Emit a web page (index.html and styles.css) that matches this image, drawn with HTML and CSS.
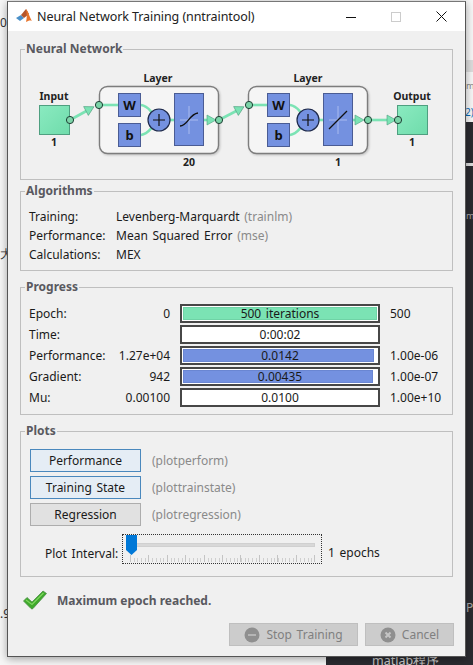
FILE: index.html
```html
<!DOCTYPE html>
<html lang="en">
<head>
    <meta charset="UTF-8">
    <meta name="viewport" content="width=device-width, initial-scale=1.0">
    <title>Neural Network Training (nntraintool)</title>
    <link rel="stylesheet" href="styles.css">
</head>
<body>
    <!-- whatever is behind the window -->
    <div class="desktop">
        <span class="peek peek-a">02</span>
        <span class="peek peek-b">大</span>
        <span class="peek peek-c">.9</span>
        <span class="peek peek-d">m</span>
        <span class="peek peek-e">2)</span>
        <span class="peek peek-h">m</span>
        <span class="peek peek-f">P</span>
        <span class="peek peek-g">matlab程序</span>
    </div>

    <div class="window">
        <div class="titlebar">
            <svg class="app-icon" width="17" height="17" viewBox="0 0 17 17">
                <path d="M0 10 L5 7 L8 10 L4 13 Z" fill="#4a90c8"/>
                <path d="M5 7 L10 1 L13 6 L8 10 Z" fill="#b5562a"/>
                <path d="M10 1 C12 3 14 10 16 13 C14 12 12 13 10 14 C11 10 11 6 10 1 Z" fill="#e8742a"/>
            </svg>
            <span class="window-title">Neural Network Training (nntraintool)</span>
            <div class="window-controls">
                <svg width="10" height="10" viewBox="0 0 10 10"><path d="M0 5.5H10" stroke="#111" stroke-width="1"/></svg>
                <svg width="10" height="10" viewBox="0 0 10 10"><rect x="0.5" y="0.5" width="9" height="9" fill="none" stroke="#ccc"/></svg>
                <svg width="11" height="11" viewBox="0 0 11 11"><path d="M0.5 0.5L10.5 10.5M10.5 0.5L0.5 10.5" stroke="#111" stroke-width="1"/></svg>
            </div>
        </div>

        <div class="content">
            <fieldset class="panel panel-network">
                <legend>Neural Network</legend>
                <svg class="diagram" width="432" height="122" viewBox="20 59 432 122">
                    <defs>
                        <linearGradient id="greenBox" x1="0" y1="0" x2="1" y2="1">
                            <stop offset="0" stop-color="#8aeac0"/>
                            <stop offset="1" stop-color="#6fdcab"/>
                        </linearGradient>
                        <g id="arrowHead"><path d="M0 -5 L9 0 L0 5 Z" fill="#7be3b4" stroke="#4f9f80" stroke-width="0.6"/></g>
                        <g id="dot"><circle r="3.6" fill="#7bd4a8" stroke="#1f3f35" stroke-width="1"/></g>
                    </defs>

                    <!-- wires, input side -->
                    <path class="wire" d="M70 120 L90 109"/>
                    <use href="#arrowHead" transform="translate(86 111) rotate(-28)"/>
                    <path class="wire" d="M219 120 L240 109"/>
                    <use href="#arrowHead" transform="translate(236 111) rotate(-28)"/>

                    <!-- layer 1 -->
                    <g class="layer">
                        <rect class="layer-box" x="99.5" y="86.5" width="119" height="67" rx="8"/>
                        <path class="wire" d="M99 105 H118"/>
                        <path class="wire" d="M141 105 C149 106 150 112 156 116"/>
                        <path class="wire" d="M141 135 C149 134 150 128 156 124"/>
                        <path class="wire" d="M168 120 H175"/>
                        <path class="wire" d="M204 120 H212"/>
                        <use href="#arrowHead" transform="translate(207 120)"/>
                        <rect class="block" x="118.5" y="93.5" width="22" height="23"/>
                        <rect class="block" x="118.5" y="123.5" width="22" height="23"/>
                        <text class="block-label" x="129.5" y="110">W</text>
                        <text class="block-label" x="129.5" y="140">b</text>
                        <circle class="sum" cx="159" cy="120" r="11"/>
                        <path class="sum-plus" d="M153 120 H165 M159 114 V126"/>
                        <rect class="block" x="174.5" y="93.5" width="29" height="52"/>
                        <path class="axis" d="M180 120 H198 M189 106 V134"/>
                        <path class="curve" d="M180 126 C188 126 189 114 198 113"/>
                        <use href="#dot" x="99" y="105"/>
                        <use href="#dot" x="219" y="120"/>
                    </g>

                    <!-- layer 2 -->
                    <g class="layer">
                        <rect class="layer-box" x="248.5" y="86.5" width="119" height="67" rx="8"/>
                        <path class="wire" d="M249 105 H267"/>
                        <path class="wire" d="M290 105 C298 106 299 112 305 116"/>
                        <path class="wire" d="M290 135 C298 134 299 128 305 124"/>
                        <path class="wire" d="M317 120 H324"/>
                        <path class="wire" d="M353 120 H361"/>
                        <use href="#arrowHead" transform="translate(355 120)"/>
                        <rect class="block" x="267.5" y="93.5" width="22" height="23"/>
                        <rect class="block" x="267.5" y="123.5" width="22" height="23"/>
                        <text class="block-label" x="278.5" y="110">W</text>
                        <text class="block-label" x="278.5" y="140">b</text>
                        <circle class="sum" cx="308" cy="120" r="11"/>
                        <path class="sum-plus" d="M302 120 H314 M308 114 V126"/>
                        <rect class="block" x="323.5" y="93.5" width="29" height="52"/>
                        <path class="axis" d="M329 120 H347 M338 106 V134"/>
                        <path class="curve" d="M329 129 L347 111"/>
                        <use href="#dot" x="249" y="105"/>
                    </g>

                    <!-- input and output -->
                    <rect class="io-box" x="39.5" y="105.5" width="30" height="29" fill="url(#greenBox)"/>
                    <rect class="io-box" x="397.5" y="105.5" width="30" height="29" fill="url(#greenBox)"/>
                    <path class="wire" d="M368 120 H392"/>
                    <use href="#arrowHead" transform="translate(387 120)"/>
                    <use href="#dot" x="70" y="120"/>
                    <use href="#dot" x="368" y="120"/>
                    <use href="#dot" x="398" y="120"/>

                    <text class="node-label" x="54" y="100">Input</text>
                    <text class="node-label" x="158" y="82">Layer</text>
                    <text class="node-label" x="308" y="82">Layer</text>
                    <text class="node-label" x="412" y="100">Output</text>
                    <text class="node-label" x="54" y="146">1</text>
                    <text class="node-label" x="412" y="146">1</text>
                    <text class="node-label" x="189" y="166">20</text>
                    <text class="node-label" x="338" y="166">1</text>
                </svg>
            </fieldset>

            <fieldset class="panel panel-algorithms">
                <legend>Algorithms</legend>
                <div class="algo-row"><span>Training:</span><span>Levenberg-Marquardt <em>(trainlm)</em></span></div>
                <div class="algo-row"><span>Performance:</span><span>Mean Squared Error <em>(mse)</em></span></div>
                <div class="algo-row"><span>Calculations:</span><span>MEX</span></div>
            </fieldset>

            <fieldset class="panel panel-progress">
                <legend>Progress</legend>
                <div class="progress-row">
                    <span>Epoch:</span><span class="start">0</span>
                    <div class="bar"><div class="fill fill-green" style="width: 100%"></div><span>500 iterations</span></div>
                    <span>500</span>
                </div>
                <div class="progress-row">
                    <span>Time:</span><span class="start"></span>
                    <div class="bar"><span>0:00:02</span></div>
                    <span></span>
                </div>
                <div class="progress-row">
                    <span>Performance:</span><span class="start">1.27e+04</span>
                    <div class="bar"><div class="fill" style="width: 98.5%"></div><span>0.0142</span></div>
                    <span>1.00e-06</span>
                </div>
                <div class="progress-row">
                    <span>Gradient:</span><span class="start">942</span>
                    <div class="bar"><div class="fill" style="width: 97.8%"></div><span>0.00435</span></div>
                    <span>1.00e-07</span>
                </div>
                <div class="progress-row">
                    <span>Mu:</span><span class="start">0.00100</span>
                    <div class="bar"><span>0.0100</span></div>
                    <span>1.00e+10</span>
                </div>
            </fieldset>

            <fieldset class="panel panel-plots">
                <legend>Plots</legend>
                <div class="plot-row"><button class="plot-btn active">Performance</button><em>(plotperform)</em></div>
                <div class="plot-row"><button class="plot-btn active">Training State</button><em>(plottrainstate)</em></div>
                <div class="plot-row"><button class="plot-btn">Regression</button><em>(plotregression)</em></div>
                <div class="interval-row">
                    <span class="interval-label">Plot Interval:</span>
                    <div class="slider">
                        <div class="track"></div>
                        <svg class="thumb" width="11" height="20" viewBox="0 0 11 20"><path d="M0 0H11V15L5.5 20L0 15Z" fill="#0078d7"/></svg>
                        <div class="ticks"></div>
                    </div>
                    <span class="interval-value">1 epochs</span>
                </div>
            </fieldset>

            <div class="status">
                <svg width="24" height="20" viewBox="0 0 24 20">
                    <path d="M0.5 11 L4 7.5 L9 12 L20 1 L23.5 3.5 L10 18.5 Q9 19.5 8 18.5 Z" fill="#3fa92c" stroke="#4d8f48" stroke-width="0.8"/>
                    <path d="M3 10 L9 14.5 L20.5 3" fill="none" stroke="#7fd65f" stroke-width="1.2"/>
                </svg>
                <span>Maximum epoch reached.</span>
            </div>

            <div class="actions">
                <button class="action-btn btn-stop">
                    <svg width="16" height="16" viewBox="0 0 16 16"><circle cx="8" cy="8" r="7.5" fill="#8f8f8f"/><path d="M4 8H12" stroke="#b5b5b5" stroke-width="2"/></svg>
                    Stop Training
                </button>
                <button class="action-btn btn-cancel">
                    <svg width="16" height="16" viewBox="0 0 16 16"><circle cx="8" cy="8" r="7.5" fill="#8f8f8f"/><path d="M5.5 5.5L10.5 10.5M10.5 5.5L5.5 10.5" stroke="#c5c5c5" stroke-width="2"/></svg>
                    Cancel
                </button>
            </div>
        </div>
    </div>
</body>
</html>
```

FILE: styles.css
```css
/* General Styles */
html, body {
    margin: 0;
    padding: 0;
}

body {
    position: relative;
    box-sizing: border-box;
    width: 473px;
    height: 665px;
    padding-top: 1px;
    overflow: hidden;
    background: #f4f4f4;
    font-family: "Noto Sans", sans-serif;
    font-size: 12px;
    word-spacing: 1.5px;
    color: #1a1a1a;
}

/* Backdrop behind the window */
.desktop {
    position: absolute;
    inset: 0;
    background:
        linear-gradient(#2b2b30, #2b2b30) 326px 657px / 147px 8px no-repeat,
        linear-gradient(#dcdcdc, #dcdcdc) 465px 163px / 8px 3px no-repeat,
        linear-gradient(#2b2b30, #2b2b30) 465px 122px / 8px 543px no-repeat,
        linear-gradient(#dcdcdc, #dcdcdc) 465px 60px / 8px 12px no-repeat,
        #f6f6f6;
}

.peek {
    position: absolute;
    font-size: 12px;
    color: #333;
}

.peek-a { left: 0; top: 14px; }
.peek-b { left: 0; top: 245px; }
.peek-c { left: 0; top: 605px; }
.peek-d { left: 466px; top: 79px; font-size: 9px; color: #888; }
.peek-e { left: 465px; top: 105px; font-size: 10px; color: #0a6ab5; }
.peek-f { left: 466px; top: 599px; color: #aaa; }
.peek-g { left: 372px; top: 652px; font-size: 12.5px; color: #ccc; }
.peek-h { left: 466px; top: 209px; font-size: 9px; color: #aaa; }

/* Window */
.window {
    position: relative;
    box-sizing: border-box;
    width: 459px;
    height: 656px;
    margin-left: 7px;
    background: #f0f0f0;
    border: 1px solid #555;
    border-top-color: #777;
    box-shadow: 0 2px 8px rgba(0, 0, 0, 0.35);
}

.titlebar {
    display: flex;
    align-items: center;
    height: 29px;
    padding-left: 8px;
    background: #fff;
}

.app-icon {
    margin-right: 4px;
}

.window-title {
    font-size: 12.5px;
    letter-spacing: -0.08px;
    word-spacing: 0;
    color: #222;
}

.window-controls {
    display: flex;
    align-items: center;
    gap: 35px;
    margin-left: auto;
    margin-right: 18px;
}

.content {
    padding: 10px 12px 0 12px;
}

/* Panels */
.panel {
    box-sizing: border-box;
    margin: 0;
    padding: 0 8px;
    border: 1px solid #bfbfbf;
    min-width: 0;
}

.panel legend {
    margin-left: -4px;
    padding: 0 1px;
    font-weight: 700;
    font-size: 12px;
    line-height: 16px;
    word-spacing: 0;
    color: #59595f;
}

.panel-network {
    height: 139px;
}

.panel-algorithms {
    height: 88px;
    margin-top: 3px;
    padding-top: 8px;
}

.panel-progress {
    height: 136px;
    margin-top: 8px;
    padding-top: 8px;
}

.panel-plots {
    height: 154px;
    margin-top: 8px;
    padding-top: 10px;
}

.diagram {
    display: block;
    margin-top: 2px;
    margin-left: -9px;
}

.wire {
    fill: none;
    stroke: #7be3b4;
    stroke-width: 2.6;
}

.layer-box {
    fill: #f5f5f5;
    stroke: #7d7d7d;
    stroke-width: 1.4;
    filter: drop-shadow(1px 1px 1px rgba(0, 0, 0, 0.2));
}

.block {
    fill: #7491e0;
    stroke: #4a5c94;
}

.block-label {
    font-size: 13px;
    font-weight: 700;
    text-anchor: middle;
    fill: #111;
}

.sum {
    fill: #7491e0;
    stroke: #1f2a4a;
    stroke-width: 1.2;
}

.sum-plus {
    stroke: #111;
    stroke-width: 1.2;
}

.axis {
    stroke: #a9bbef;
    stroke-width: 1;
}

.curve {
    fill: none;
    stroke: #111;
    stroke-width: 1.3;
}

.io-box {
    stroke: #4f9f80;
}

.node-label {
    font-size: 10.5px;
    font-weight: 700;
    text-anchor: middle;
    fill: #222;
}

/* Algorithms */
.algo-row {
    display: grid;
    grid-template-columns: 87px auto;
    height: 19px;
    line-height: 19px;
}

em {
    font-style: normal;
    color: #8a8a8a;
}

/* Progress */
.progress-row {
    display: grid;
    grid-template-columns: 76px 65px 210px auto;
    align-items: center;
    height: 21px;
}

.start {
    text-align: right;
}

.progress-row .bar {
    margin-left: 10px;
}

.progress-row > span:last-child {
    padding-left: 10px;
}

.bar {
    display: grid;
    box-sizing: border-box;
    width: 200px;
    height: 19px;
    padding: 1px;
    background: #fff;
    border: 2px solid #474747;
    text-align: center;
    line-height: 13px;
}

.bar > * {
    grid-area: 1 / 1;
}

.fill {
    background: #7491e0;
    border: 1px solid #6a86d2;
    box-sizing: border-box;
}

.fill-green {
    background: #7be3b4;
    border-color: #6fd3a6;
}

/* Plots */
.plot-row {
    display: flex;
    align-items: center;
    gap: 11px;
    height: 23px;
    margin-bottom: 4px;
    margin-left: 1px;
}

.plot-btn {
    width: 111px;
    height: 23px;
    padding: 0;
    font-family: inherit;
    font-size: 12px;
    word-spacing: inherit;
    color: #1a1a1a;
    background: #e1e1e1;
    border: 1px solid #adadad;
}

.plot-btn.active {
    background: #e5edf5;
    border-color: #4a88bd;
}

.interval-row {
    display: flex;
    align-items: center;
    margin-top: 8px;
    margin-left: 1px;
}

.interval-label {
    width: 92px;
    padding-left: 15px;
    box-sizing: border-box;
    margin-top: 8px;
}

.slider {
    position: relative;
    box-sizing: border-box;
    width: 200px;
    height: 30px;
    border: 1px dotted #333;
}

.track {
    position: absolute;
    left: 7px;
    right: 6px;
    top: 8px;
    height: 2px;
    background: #d8d8d8;
    border: 1px solid #d0d0d0;
}

.thumb {
    position: absolute;
    left: 3px;
    top: 0;
}

.ticks {
    position: absolute;
    left: 7px;
    right: 6px;
    bottom: 1px;
    height: 7px;
    background:
        repeating-linear-gradient(90deg, #c4c4c4 0 1px, transparent 1px 18.4px) 0 0 / 100% 7px no-repeat,
        repeating-linear-gradient(90deg, #cfcfcf 0 1px, transparent 1px 3.7px) 0 3px / 100% 4px no-repeat;
}

.interval-value {
    margin-left: 6px;
    margin-top: 6px;
}

/* Status and buttons */
.status {
    display: flex;
    align-items: center;
    gap: 10px;
    margin-top: 13px;
    margin-left: 3px;
    font-weight: 700;
    word-spacing: 0;
    color: #59595f;
}

.actions {
    display: flex;
    justify-content: flex-end;
    gap: 7px;
    margin-top: 13px;
    margin-right: -1px;
}

.action-btn {
    display: flex;
    align-items: center;
    justify-content: center;
    gap: 6px;
    height: 23px;
    padding: 0;
    font-family: inherit;
    font-size: 12px;
    word-spacing: inherit;
    color: #808080;
    background: #cccccc;
    border: 1px solid #bfbfbf;
}

.btn-stop {
    width: 129px;
}

.btn-cancel {
    width: 89px;
}
```
